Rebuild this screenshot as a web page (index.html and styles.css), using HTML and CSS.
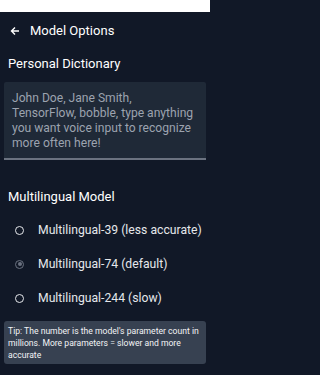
FILE: index.html
```html
<!DOCTYPE html>
<html>
<head>
<meta charset="utf-8">
<meta name="viewport" content="width=210">
<link rel="stylesheet" href="styles.css">
</head>
<body>
<div class="page">
<div class="statusbar"></div>
<div class="app">
  <header class="header">
    <svg class="back" width="10" height="10" viewBox="0 0 10 10"><path d="M9 5H1.6M5 1.5L1.5 5 5 8.5" fill="none" stroke="#fff" stroke-width="1.4"/></svg>
    <span class="title">Model Options</span>
  </header>
  <h2 class="section">Personal Dictionary</h2>
  <div class="textarea">John Doe, Jane Smith, TensorFlow, bobble, type anything you want voice input to recognize more often here!</div>
  <h2 class="section section-model">Multilingual Model</h2>
  <div class="options">
    <div class="option"><span class="radio"></span><span class="label">Multilingual-39 (less accurate)</span></div>
    <div class="option"><span class="radio checked"></span><span class="label">Multilingual-74 (default)</span></div>
    <div class="option"><span class="radio"></span><span class="label">Multilingual-244 (slow)</span></div>
  </div>
  <div class="tip">Tip: The number is the model's parameter count in millions. More parameters = slower and more accurate</div>
</div>
</div>
</body>
</html>
```
FILE: styles.css
```css
html, body {
  margin: 0;
  padding: 0;
  background: #111827;
  font-family: Roboto, "Noto Sans", sans-serif;
}
.page {
  width: 210px;
  overflow: hidden;
}
.statusbar {
  height: 12px;
  background: #ffffff;
}
.app {
  background: #111827;
  min-height: 363px;
  color: #f3f4f6;
}
.header {
  height: 36px;
  display: flex;
  align-items: center;
  padding: 2px 0 0 10px;
  box-sizing: border-box;
}
.back {
  display: block;
  margin-right: 10px;
}
.title {
  font-size: 13px;
  color: #ffffff;
  line-height: 18px;
}
.section {
  margin: 7px 0 0 0;
  padding-left: 8px;
  font-size: 13px;
  font-weight: 400;
  line-height: 18px;
  color: #ffffff;
}
.textarea {
  margin: 9px 4px 0 4px;
  background: #1f2937;
  color: #9ca3af;
  font-size: 12.1px;
  line-height: 15px;
  padding: 9px 8px 7px 8px;
  border-bottom: 2px solid #6b7280;
  border-radius: 2px 2px 0 0;
}
.section-model {
  margin-top: 28px;
}
.options {
  margin-top: 7px;
}
.option {
  height: 34px;
  display: flex;
  align-items: center;
  padding-left: 15px;
}
.radio {
  width: 7px;
  height: 7px;
  border: 1.6px solid #e5e7eb;
  border-radius: 50%;
  margin-right: 14px;
  position: relative;
  flex: none;
}
.radio.checked {
  border-color: #6b7280;
}
.radio.checked::after {
  content: "";
  position: absolute;
  left: 1.5px;
  top: 1.5px;
  width: 4px;
  height: 4px;
  border-radius: 50%;
  background: #6b7280;
}
.label {
  font-size: 12.2px;
  color: #e5e7eb;
  white-space: nowrap;
}
.tip {
  margin: 6px 4px 0 4px;
  background: #374151;
  border-radius: 3px;
  padding: 4px 4px 3px 4px;
  font-size: 8.6px;
  line-height: 12px;
  color: #f3f4f6;
}
```
